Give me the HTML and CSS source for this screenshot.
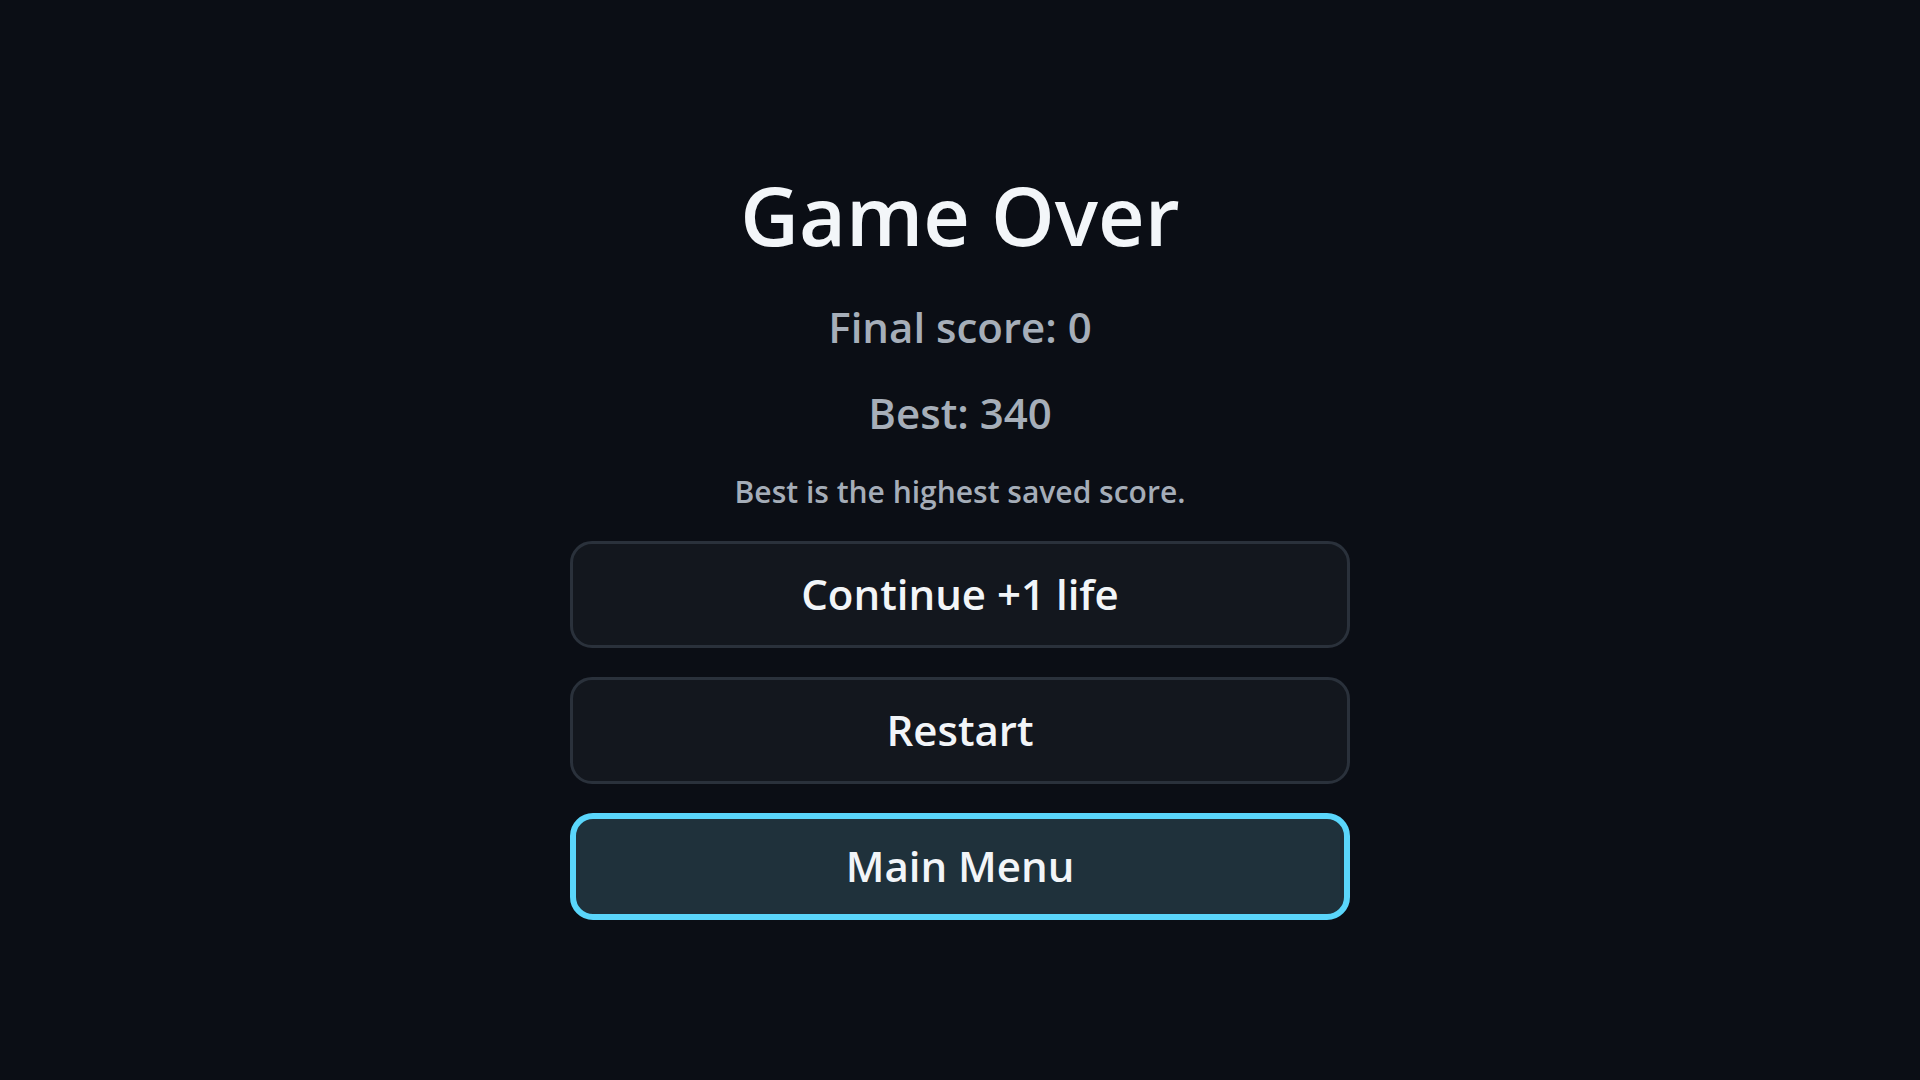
FILE: index.html
```html
<!DOCTYPE html>
<html lang="en">
<head>
<meta charset="utf-8">
<title>Game Over</title>
<link rel="stylesheet" href="styles.css">
</head>
<body>
<main class="screen">
  <section class="panel">
    <h1 class="title">Game Over</h1>
    <p class="stat stat-final">Final score: 0</p>
    <p class="stat stat-best">Best: 340</p>
    <p class="note">Best is the highest saved score.</p>
    <div class="actions">
      <button class="btn">Continue +1 life</button>
      <button class="btn">Restart</button>
      <button class="btn btn-focus">Main Menu</button>
    </div>
  </section>
</main>
</body>
</html>
```

FILE: styles.css
```css
* { box-sizing: border-box; }
html, body {
  margin: 0;
  padding: 0;
  height: 100%;
  background: #0b0e15;
}
body {
  font-family: "Open Sans", "Noto Sans", sans-serif;
  color: #f2f5f8;
}
.screen {
  height: 100vh;
  display: flex;
  justify-content: center;
  align-items: flex-start;
}
.panel {
  width: 780px;
  margin-top: 165px;
  display: flex;
  flex-direction: column;
  align-items: center;
}
.title {
  margin: 0;
  font-size: 81px;
  line-height: 100px;
  font-weight: 600;
  color: #f3f6f9;
}
.stat {
  margin: 37px 0 0;
  font-size: 42px;
  line-height: 50px;
  font-weight: 600;
  color: #a6aeb9;
}
.stat-best { margin-top: 36px; }
.note {
  margin: 37px 0 0;
  font-size: 30px;
  line-height: 34px;
  font-weight: 600;
  color: #a5adb8;
}
.actions {
  margin-top: 32px;
  width: 100%;
  display: flex;
  flex-direction: column;
  gap: 29px;
}
.btn {
  width: 100%;
  height: 107px;
  border: 3px solid #2a313b;
  border-radius: 22px;
  background: #13171e;
  color: #f2f5f8;
  font-family: "Open Sans", "Noto Sans", sans-serif;
  font-size: 42px;
  line-height: 50px;
  font-weight: 600;
  padding: 0 0 2px;
}
.btn-focus {
  border: 6px solid #5ad6fb;
  background: #1f313b;
  border-radius: 23px;
}
```
